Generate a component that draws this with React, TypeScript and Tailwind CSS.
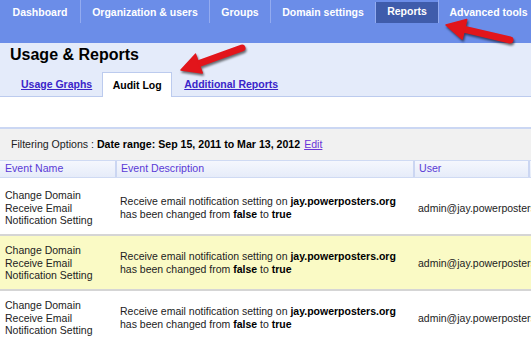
const navTabs = [
  { label: "Dashboard", w: "w-[80px]" },
  { label: "Organization & users", w: "w-[129px]" },
  { label: "Groups", w: "w-[61px]" },
  { label: "Domain settings", w: "w-[105px]" },
  { label: "Reports", w: "w-[63px]", active: true },
  { label: "Advanced tools", w: "w-[100px]" },
];

const rows = [{ hl: false }, { hl: true }, { hl: false }];

// red annotation arrow, tail -> tip
function Arrow({ x1, y1, x2, y2 }: { x1: number; y1: number; x2: number; y2: number }) {
  const dx = x2 - x1;
  const dy = y2 - y1;
  const len = Math.sqrt(dx * dx + dy * dy);
  const ux = dx / len;
  const uy = dy / len;
  const bx = x2 - ux * 19;
  const by = y2 - uy * 19;
  const nx = -uy;
  const ny = ux;
  const pts = `${x2},${y2} ${bx + nx * 10},${by + ny * 10} ${bx - nx * 10},${by - ny * 10}`;
  return (
    <g>
      <line x1={x1} y1={y1} x2={bx + ux * 2} y2={by + uy * 2} stroke="#e2151b" strokeWidth="7" strokeLinecap="round" />
      <polygon points={pts} fill="#e2151b" stroke="#e2151b" strokeWidth="1.5" strokeLinejoin="round" />
    </g>
  );
}

export default function App() {
  return (
    <div
      className="relative w-[531px] h-[339px] overflow-hidden bg-white text-[#222]"
      style={{ fontFamily: '"Liberation Sans", Arial, sans-serif' }}
    >
      {/* Top nav */}
      <nav className="h-[43px] bg-[#6b8de8]">
        <div className="flex h-[23px] whitespace-nowrap">
          {navTabs.map((t, i) => (
            <div
              key={t.label}
              className={`${t.w} shrink-0 flex items-center justify-center text-[10.5px] font-bold text-white ${
                i > 0 ? "border-l border-[#93abf0]" : ""
              } ${t.active ? "bg-[#3f5cab] mt-[2px] pb-[2px]" : "pt-[2px]"}`}
            >
              {t.label}
            </div>
          ))}
        </div>
      </nav>

      {/* Title + subtabs */}
      <section className="bg-[#e4ebfa] pt-[2px]">
        <h1 className="pl-[10px] text-[16px] leading-[20px] font-bold text-black">Usage &amp; Reports</h1>
        <div className="flex items-end mt-[7px] h-[25px] text-[10.5px] font-bold">
          <div className="pl-[21px] pr-[10px] h-full flex items-center pt-[1px] border-b border-[#bccbee]">
            <a href="#" className="text-[#3a24c9] underline">Usage Graphs</a>
          </div>
          <div className="w-[70px] h-full flex items-center justify-center pt-[1px] bg-white border border-b-0 border-[#bccbee] text-black">
            Audit Log
          </div>
          <div className="pl-[12px] h-full flex items-center pt-[1px] border-b border-[#bccbee]">
            <a href="#" className="text-[#3a24c9] underline whitespace-nowrap">Additional Reports</a>
          </div>
          <div className="flex-1 h-full border-b border-[#bccbee]" />
        </div>
      </section>

      <div className="h-[30px]" />

      {/* Filter bar */}
      <div className="h-[33px] border-t-2 border-[#cbd7f3] bg-[#f1f1f1] flex items-center pl-[11px] text-[10.6px] whitespace-nowrap">
        <span>Filtering Options :&nbsp;</span>
        <span className="font-bold text-black">Date range: Sep 15, 2011 to Mar 13, 2012</span>
        <a href="#" className="ml-[4px] text-[#6a35d8] underline">Edit</a>
      </div>

      {/* Table header */}
      <div className="grid grid-cols-[115px_298px_115px_1fr] h-[18px] border-t border-b border-[#cfdaf3] bg-gradient-to-b from-[#f5f7fd] to-[#e6ecf9] text-[10.6px] text-[#5a3ad6]">
        <div className="pl-[5px] flex items-center">Event Name</div>
        <div className="pl-[4px] flex items-center border-l-2 border-[#cbd6f2]">Event Description</div>
        <div className="pl-[4px] flex items-center border-l-2 border-[#cbd6f2]">User</div>
        <div className="border-l-2 border-[#cbd6f2]" />
      </div>

      {/* Rows */}
      <div className="pt-[3px]">
        {rows.map((r, i) => (
          <div
            key={i}
            className={`grid grid-cols-[115px_298px_118px] h-[55px] border-b-2 border-[#d5d5d5] text-[10.5px] ${
              r.hl ? "bg-[#fafac5]" : "bg-white"
            }`}
          >
            <div className="pl-[5px] pt-[8px] leading-[12.5px]">
              Change Domain
              <br />
              Receive Email
              <br />
              Notification Setting
            </div>
            <div className="pl-[5px] pt-[14px] leading-[12.5px] whitespace-nowrap">
              Receive email notification setting on <b className="text-black">jay.powerposters.org</b>
              <br />
              has been changed from <b className="text-black">false</b> to <b className="text-black">true</b>
            </div>
            <div className="pl-[5px] pt-[21px] leading-[12.5px] whitespace-nowrap overflow-hidden">
              admin@jay.powerposters.org
            </div>
          </div>
        ))}
      </div>

      {/* annotation arrows */}
      <svg
        className="absolute inset-0 pointer-events-none drop-shadow-[1px_2px_1px_rgba(0,0,0,0.55)]"
        width="531"
        height="339"
      >
        <Arrow x1={242} y1={48} x2={181} y2={70} />
        <Arrow x1={510} y1={40} x2={446} y2={25} />
      </svg>
    </div>
  );
}
